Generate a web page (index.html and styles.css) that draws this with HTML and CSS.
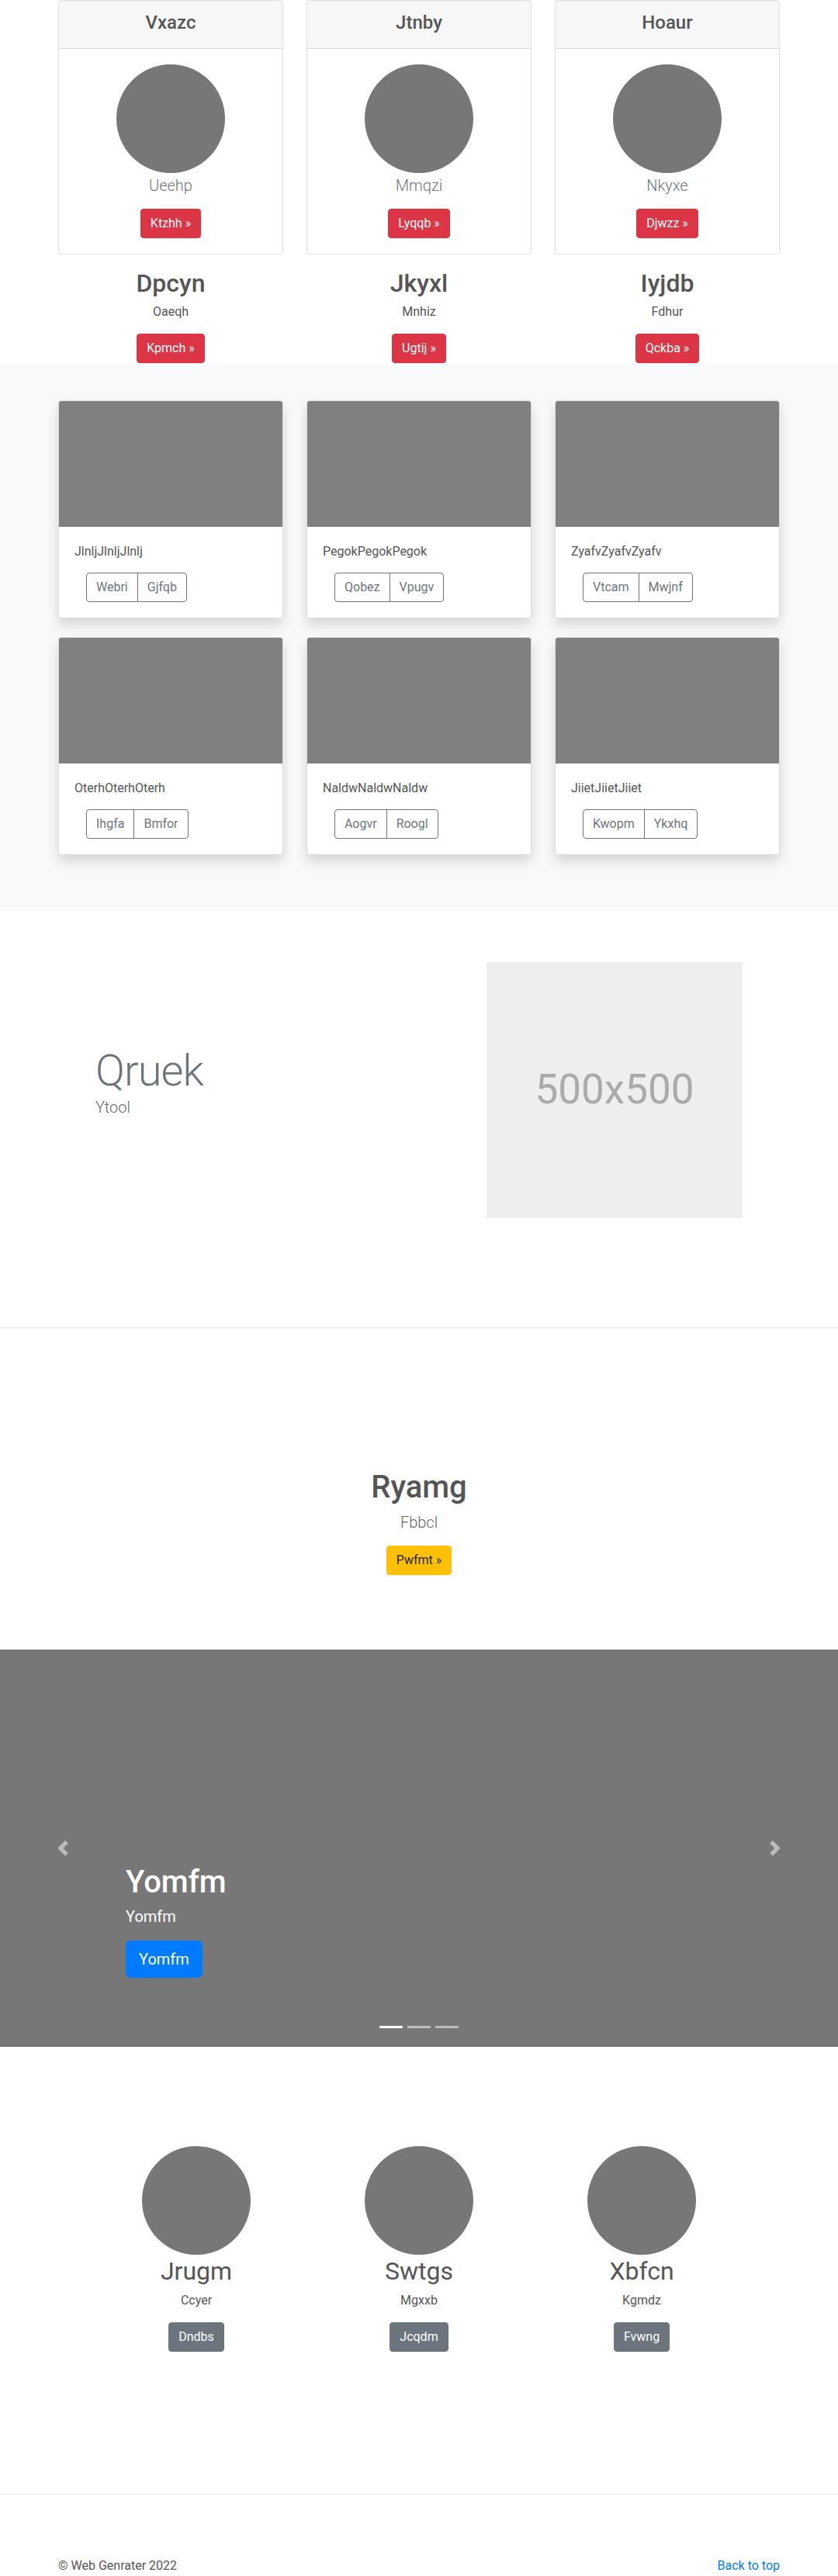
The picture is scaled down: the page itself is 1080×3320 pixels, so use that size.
FILE: index.html
```html
<!DOCTYPE html>
<html lang="en">
<head>
<meta charset="utf-8">
<title>Web Genrater</title>
<link rel="stylesheet" href="styles.css">
</head>
<body>

<section class="pricing">
  <div class="container">
    <div class="grid3">
      <div class="pcard">
        <div class="pcard-head"><h4>Vxazc</h4></div>
        <div class="pcard-body">
          <div class="avatar"></div>
          <p class="lead">Ueehp</p>
          <a class="btn btn-danger" href="#">Ktzhh &raquo;</a>
        </div>
      </div>
      <div class="pcard">
        <div class="pcard-head"><h4>Jtnby</h4></div>
        <div class="pcard-body">
          <div class="avatar"></div>
          <p class="lead">Mmqzi</p>
          <a class="btn btn-danger" href="#">Lyqqb &raquo;</a>
        </div>
      </div>
      <div class="pcard">
        <div class="pcard-head"><h4>Hoaur</h4></div>
        <div class="pcard-body">
          <div class="avatar"></div>
          <p class="lead">Nkyxe</p>
          <a class="btn btn-danger" href="#">Djwzz &raquo;</a>
        </div>
      </div>
    </div>
    <div class="grid3">
      <div class="feature">
        <h2>Dpcyn</h2>
        <p>Oaeqh</p>
        <a class="btn btn-danger" href="#">Kpmch &raquo;</a>
      </div>
      <div class="feature">
        <h2>Jkyxl</h2>
        <p>Mnhiz</p>
        <a class="btn btn-danger" href="#">Ugtij &raquo;</a>
      </div>
      <div class="feature">
        <h2>Iyjdb</h2>
        <p>Fdhur</p>
        <a class="btn btn-danger" href="#">Qckba &raquo;</a>
      </div>
    </div>
  </div>
</section>

<section class="album">
  <div class="container">
    <div class="grid3">
      <div class="acard">
        <div class="acard-img"></div>
        <div class="acard-body">
          <p>JlnljJlnljJlnlj</p>
          <div class="btn-group"><a class="btn btn-outline" href="#">Webri</a><a class="btn btn-outline" href="#">Gjfqb</a></div>
        </div>
      </div>
      <div class="acard">
        <div class="acard-img"></div>
        <div class="acard-body">
          <p>PegokPegokPegok</p>
          <div class="btn-group"><a class="btn btn-outline" href="#">Qobez</a><a class="btn btn-outline" href="#">Vpugv</a></div>
        </div>
      </div>
      <div class="acard">
        <div class="acard-img"></div>
        <div class="acard-body">
          <p>ZyafvZyafvZyafv</p>
          <div class="btn-group"><a class="btn btn-outline" href="#">Vtcam</a><a class="btn btn-outline" href="#">Mwjnf</a></div>
        </div>
      </div>
      <div class="acard">
        <div class="acard-img"></div>
        <div class="acard-body">
          <p>OterhOterhOterh</p>
          <div class="btn-group"><a class="btn btn-outline" href="#">Ihgfa</a><a class="btn btn-outline" href="#">Bmfor</a></div>
        </div>
      </div>
      <div class="acard">
        <div class="acard-img"></div>
        <div class="acard-body">
          <p>NaldwNaldwNaldw</p>
          <div class="btn-group"><a class="btn btn-outline" href="#">Aogvr</a><a class="btn btn-outline" href="#">Roogl</a></div>
        </div>
      </div>
      <div class="acard">
        <div class="acard-img"></div>
        <div class="acard-body">
          <p>JiietJiietJiiet</p>
          <div class="btn-group"><a class="btn btn-outline" href="#">Kwopm</a><a class="btn btn-outline" href="#">Ykxhq</a></div>
        </div>
      </div>
    </div>
  </div>
</section>

<section class="split">
  <div class="container split-grid">
    <div class="split-text">
      <h1 class="display">Qruek</h1>
      <p class="lead split-sub">Ytool</p>
    </div>
    <div class="ph"><span>500x500</span></div>
  </div>
</section>

<section class="hero">
  <h1>Ryamg</h1>
  <p class="lead">Fbbcl</p>
  <a class="btn btn-warning" href="#">Pwfmt &raquo;</a>
</section>

<section class="carousel">
  <a class="ctrl prev" href="#">
    <svg viewBox="0 0 8 8" width="20" height="20"><path fill="#fff" d="M5.25 0l-4 4 4 4 1.5-1.5-2.5-2.5 2.5-2.5-1.5-1.5z"/></svg>
  </a>
  <a class="ctrl next" href="#">
    <svg viewBox="0 0 8 8" width="20" height="20"><path fill="#fff" d="M2.75 0l-1.5 1.5 2.5 2.5-2.5 2.5 1.5 1.5 4-4-4-4z"/></svg>
  </a>
  <div class="caption">
    <h1>Yomfm</h1>
    <p>Yomfm</p>
    <a class="btn btn-lg btn-primary" href="#">Yomfm</a>
  </div>
  <div class="indicators"><span class="active"></span><span></span><span></span></div>
</section>

<section class="marketing">
  <div class="mgrid">
    <div class="mcol">
      <div class="avatar"></div>
      <h2>Jrugm</h2>
      <p>Ccyer</p>
      <a class="btn btn-secondary" href="#">Dndbs</a>
    </div>
    <div class="mcol">
      <div class="avatar"></div>
      <h2>Swtgs</h2>
      <p>Mgxxb</p>
      <a class="btn btn-secondary" href="#">Jcqdm</a>
    </div>
    <div class="mcol">
      <div class="avatar"></div>
      <h2>Xbfcn</h2>
      <p>Kgmdz</p>
      <a class="btn btn-secondary" href="#">Fvwng</a>
    </div>
  </div>
</section>

<hr class="divider">

<footer class="footer">
  <div class="container footer-row">
    <p>&copy; Web Genrater 2022</p>
    <a class="top-link" href="#">Back to top</a>
  </div>
</footer>

</body>
</html>
```

FILE: styles.css
```css
* { box-sizing: border-box; }

body {
  margin: 0;
  font-family: "Segoe UI", Roboto, "Helvetica Neue", Arial, sans-serif;
  font-size: 16px;
  line-height: 1.5;
  color: #555;
  background: #fff;
}

h1, h2, h3, h4, p { margin: 0; }

.container {
  width: 930px;
  margin: 0 auto;
}

.grid3 {
  display: grid;
  grid-template-columns: repeat(3, 290px);
  column-gap: 30px;
}

/* buttons */
.btn {
  display: inline-block;
  font-size: 16px;
  line-height: 24px;
  padding: 6px 12px;
  border: 1px solid transparent;
  border-radius: 4px;
  text-decoration: none;
  font-weight: 400;
  white-space: nowrap;
}
.btn-danger { background: #dc3545; border-color: #dc3545; color: #fff; }
.btn-warning { background: #ffc107; border-color: #ffc107; color: #212529; }
.btn-primary { background: #007bff; border-color: #007bff; color: #fff; }
.btn-secondary { background: #6c757d; border-color: #6c757d; color: #fff; }
.btn-outline { background: transparent; border-color: #6c757d; color: #6c757d; }
.btn-lg { font-size: 20px; line-height: 30px; padding: 8px 16px; border-radius: 6px; }

.lead { font-size: 20px; font-weight: 300; line-height: 30px; }

.avatar {
  width: 140px;
  height: 140px;
  border-radius: 50%;
  background: #777;
}

/* pricing */
.pcard {
  border: 1px solid rgba(0, 0, 0, 0.125);
  border-radius: 4px;
  overflow: hidden;
  margin-bottom: 16px;
  text-align: center;
}
.pcard-head {
  background: rgba(0, 0, 0, 0.03);
  border-bottom: 1px solid rgba(0, 0, 0, 0.125);
  padding: 12px 20px;
}
.pcard-head h4 {
  font-size: 24px;
  font-weight: 500;
  line-height: 1.2;
  padding-top: 2px;
  margin-bottom: 6px;
}
.pcard-body {
  padding: 20px;
  display: flex;
  flex-direction: column;
  align-items: center;
}
.pcard-body .lead {
  padding-top: 1px;
  margin-bottom: 15px;
  color: #6c757d;
}

.feature {
  display: flex;
  flex-direction: column;
  align-items: center;
  text-align: center;
}
.feature h2 {
  font-size: 32px;
  font-weight: 500;
  line-height: 1.2;
  padding-top: 2px;
  margin-bottom: 6px;
}
.feature p { margin-bottom: 16px; }

/* album */
.album {
  background: #f8f9fa;
  padding: 48px 0;
}
.acard {
  background: #fff;
  border: 1px solid rgba(0, 0, 0, 0.125);
  border-radius: 4px;
  overflow: hidden;
  box-shadow: 0 8px 16px rgba(0, 0, 0, 0.15);
  margin-bottom: 24px;
}
.acard-img {
  height: 162px;
  background: #808080;
}
.acard-body { padding: 20px; }
.acard-body p { margin-bottom: 15px; }
.btn-group {
  display: inline-flex;
  margin-left: 15px;
}
.btn-group .btn:first-child { border-top-right-radius: 0; border-bottom-right-radius: 0; }
.btn-group .btn:last-child { border-top-left-radius: 0; border-bottom-left-radius: 0; margin-left: -1px; }

/* split */
.split { padding: 66px 0 141px; }
.split-grid {
  display: grid;
  grid-template-columns: 1fr 1fr;
  column-gap: 30px;
  align-items: center;
}
.split-text { padding-left: 48px; }
.display {
  font-size: 56px;
  font-weight: 300;
  line-height: 1.2;
  letter-spacing: -1px;
  color: #6c757d;
  padding-top: 4px;
  margin-bottom: -2px;
}
.split-sub { color: #666; margin-bottom: 26px; }
.ph {
  width: 330px;
  height: 330px;
  justify-self: end;
  margin-right: 48px;
  background: #eee;
  color: #aaa;
  font-size: 53px;
  display: flex;
  align-items: center;
  justify-content: center;
}

/* hero */
.hero {
  border-top: 1px solid #e5e5e5;
  padding: 178px 0 96px;
  display: flex;
  flex-direction: column;
  align-items: center;
  text-align: center;
}
.hero h1 {
  font-size: 40px;
  font-weight: 500;
  line-height: 1.2;
  padding-top: 3px;
  margin-bottom: 5px;
}
.hero .lead {
  color: #666;
  padding-top: 1px;
  margin-bottom: 15px;
}

/* carousel */
.carousel {
  position: relative;
  height: 512px;
  background: #777;
}
.ctrl {
  position: absolute;
  top: 0;
  bottom: 0;
  width: 15%;
  display: flex;
  align-items: center;
  justify-content: center;
  opacity: 0.5;
}
.ctrl.prev { left: 0; }
.ctrl.next { right: 0; }
.ctrl svg { display: block; width: 20px; height: 20px; }
.caption {
  position: absolute;
  left: 15%;
  right: 15%;
  bottom: 89px;
  color: #fff;
}
.caption h1 {
  font-size: 40px;
  font-weight: 500;
  line-height: 1.2;
  padding-top: 3px;
  margin-bottom: 5px;
}
.caption p {
  font-size: 20px;
  line-height: 30px;
  margin-bottom: 16px;
}
.indicators {
  position: absolute;
  left: 0;
  right: 0;
  bottom: 24px;
  display: flex;
  justify-content: center;
  gap: 6px;
}
.indicators span {
  width: 30px;
  height: 3px;
  background: #fff;
  opacity: 0.5;
}
.indicators .active { opacity: 1; }

/* marketing */
.marketing { padding-top: 128px; }
.mgrid {
  width: 861px;
  margin: 0 auto;
  display: grid;
  grid-template-columns: repeat(3, 287px);
}
.mcol {
  display: flex;
  flex-direction: column;
  align-items: center;
  text-align: center;
}
.mcol h2 {
  font-size: 32px;
  font-weight: 400;
  line-height: 1.2;
  padding-top: 2px;
  margin-bottom: 6px;
}
.mcol p { margin-bottom: 16px; }

.divider {
  border: 0;
  border-top: 1px solid rgba(0, 0, 0, 0.1);
  margin: 183px 0 80px;
}

.footer-row {
  display: flex;
  justify-content: space-between;
}
.top-link { color: #007bff; text-decoration: none; }
```
